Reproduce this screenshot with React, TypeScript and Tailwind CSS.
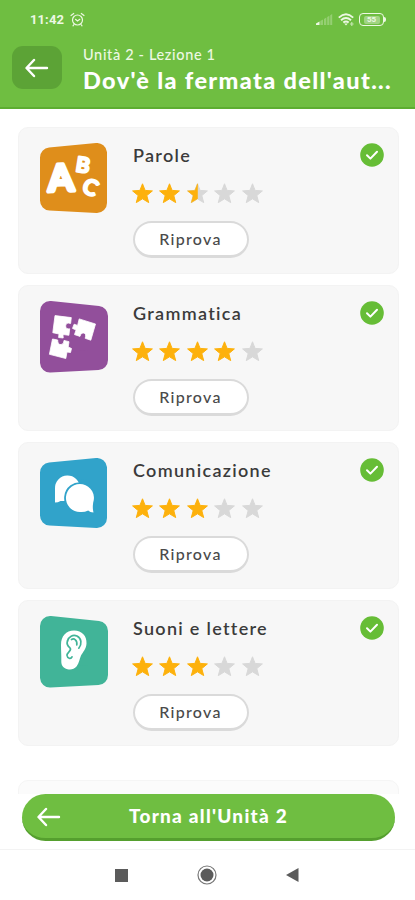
import type { ReactNode } from "react";

type Lesson = {
  title: string;
  stars: number;
  icon: ReactNode;
};

const STAR =
  "M10.5 0.8 L13.1 7.4 L20.4 7.9 L14.8 12.6 L16.7 19.6 L10.5 15.8 L4.3 19.6 L6.2 12.6 L0.6 7.9 L7.9 7.4 Z";
const HALF_STAR = "M10.5 0.8 L10.5 15.8 L4.3 19.6 L6.2 12.6 L0.6 7.9 L7.9 7.4 Z";

function Tile({
  color,
  flipped = false,
  children,
}: {
  color: string;
  flipped?: boolean;
  children: ReactNode;
}) {
  return (
    <svg width="68" height="72" viewBox="0 0 68 72" className="shrink-0">
      <polygon
        points={flipped ? "10,10 58,15 58,59 10,61.5" : "10,14.5 57,10 57,60 10,57.5"}
        fill={color}
        stroke={color}
        strokeWidth="20"
        strokeLinejoin="round"
      />
      {children}
    </svg>
  );
}

function LettersIcon() {
  return (
    <Tile color="#df8e1b">
      <g
        fill="#fff"
        stroke="#fff"
        strokeLinejoin="round"
        textAnchor="middle"
        className="font-['Lato',sans-serif] font-bold"
      >
        <text x="20.8" y="48" fontSize="37" strokeWidth="4" transform="rotate(-2 20.5 35)">A</text>
        <text x="43" y="29.5" fontSize="21" strokeWidth="2.2" transform="rotate(9 43 22)">B</text>
        <text x="50.2" y="52" fontSize="22" strokeWidth="2" transform="rotate(22 50.5 45)">C</text>
      </g>
    </Tile>
  );
}

function PuzzleIcon() {
  return (
    <Tile color="#924f9b" flipped>
      <g fill="#fff" stroke="#fff" strokeWidth="0.8" strokeLinejoin="round">
        <path d="M15 14.6 L31.3 16.6 L30.6 22.5 Q26 21 25.6 25 Q26 28.5 29.7 27.8 L28.9 34.3 L23 33.5 L23.2 37 L18.6 36.5 L19 33 L12.8 31.7 Z" />
        <path d="M39.2 17.9 L55.5 23 L50.8 39.2 L45.2 37.3 Q46.8 32.5 43.2 31.9 Q40.5 31.8 40 35.4 L34.5 33.6 L36.1 29 L32.5 27.4 L34.1 23.2 L37.6 24.4 Z" />
        <path d="M12.5 38 L17.7 39 Q17.5 43.5 21 43.6 Q24 43.4 24 39.4 L29 40.7 L28.2 46 L31.5 47.5 L30.5 51.5 L27 51 L25.8 57.5 L9.4 53.3 Z" />
      </g>
    </Tile>
  );
}

function ChatIcon() {
  return (
    <Tile color="#31a3ca">
      <path
        d="M15 44.5 V30.5 A12.5 12.5 0 1 1 27.5 42.5 Q22.5 43.2 20.5 43 Q18 44.5 15 44.5 Z"
        fill="#fff"
      />
      <path
        d="M53.5 54.5 Q50 54.3 48.2 52.4 Q44.5 54.3 40.5 54 A14 14 0 1 1 53.2 44.5 Q52.3 50 53.5 54.5 Z"
        fill="#fff"
        stroke="#31a3ca"
        strokeWidth="3.6"
        paintOrder="stroke"
      />
    </Tile>
  );
}

function EarIcon() {
  return (
    <Tile color="#41b498" flipped>
      <path
        d="M21.3 45 C21.5 40 21 35 21 29 C21 20 26 14.5 34 14.5 C42 14.5 46.9 20 46.5 27.5 C46.2 33 43 36 41 39.5 C39.4 43 39.3 47 36.5 50.5 C34.2 53.4 30.5 54 27.5 53.2 C23 52 21.2 49.5 21.3 45 Z"
        fill="#fff"
      />
      <g fill="none" stroke="#41b498" strokeWidth="1.7" strokeLinecap="round">
        <path d="M27.5 25 C28.5 20.5 33 18.2 37 20 C41.5 22.3 42.2 28 38.8 32.2" />
        <path d="M27.5 25 C26 28.5 28.3 30.5 30 32 C32.5 34.5 26.5 36.5 27 39.5 C27.4 42.3 30.8 43.5 32 40.8" />
        <path d="M31.5 23.5 C34 22 37.5 24 36.8 28.8" />
      </g>
    </Tile>
  );
}

const lessons: Lesson[] = [
  { title: "Parole", stars: 2.5, icon: <LettersIcon /> },
  { title: "Grammatica", stars: 4, icon: <PuzzleIcon /> },
  { title: "Comunicazione", stars: 3, icon: <ChatIcon /> },
  { title: "Suoni e lettere", stars: 3, icon: <EarIcon /> },
];

function Stars({ value }: { value: number }) {
  return (
    <div className="flex gap-[6.5px]">
      {[0, 1, 2, 3, 4].map((i) => {
        const fill = value >= i + 1 ? "#fdb10c" : "#d8d8d8";
        return (
          <svg key={i} width="21" height="21" viewBox="0 0 21 21" strokeWidth="1" strokeLinejoin="round">
            <path d={STAR} fill={fill} stroke={fill} />
            {value === i + 0.5 && <path d={HALF_STAR} fill="#fdb10c" stroke="#fdb10c" strokeWidth="0.6" />}
          </svg>
        );
      })}
    </div>
  );
}

function Arrow() {
  return (
    <svg
      width="24"
      height="20"
      viewBox="0 0 24 20"
      fill="none"
      stroke="#fff"
      strokeWidth="2.4"
      strokeLinecap="round"
      strokeLinejoin="round"
    >
      <path d="M9 2 L1.5 10 L9 18 M2 10 H22" />
    </svg>
  );
}

function LessonCard({ lesson }: { lesson: Lesson }) {
  return (
    <div className="flex h-[146.5px] shrink-0 rounded-[10px] border border-[#f3f3f3] bg-[#f7f7f7] pl-[21px] pr-[14px] pt-[15px]">
      {lesson.icon}
      <div className="ml-[23.5px] flex flex-1 flex-col items-start">
        <h2 className="h-6 pl-[1.5px] text-[18px] leading-6 font-semibold tracking-[1.3px] text-[#3b3b3b]">
          {lesson.title}
        </h2>
        <div className="mt-4">
          <Stars value={lesson.stars} />
        </div>
        <button className="mt-[17px] ml-px flex h-[37px] w-[116px] items-center justify-center rounded-full border-2 border-b-[3px] border-[#dadada] bg-white text-[16px] font-medium tracking-[1.3px] text-[#4a4a4a]">
          Riprova
        </button>
      </div>
      <svg width="24" height="24" viewBox="0 0 24 24" className="shrink-0">
        <circle cx="12" cy="12" r="11.8" fill="#66bd36" />
        <path
          d="M7 12.3 L10.4 15.6 L17 8.8"
          fill="none"
          stroke="#fff"
          strokeWidth="2"
          strokeLinecap="round"
          strokeLinejoin="round"
        />
      </svg>
    </div>
  );
}

function StatusBar() {
  return (
    <div className="flex h-[39px] items-center justify-between pl-[30px] pr-[29px] text-[#edf8e3]">
      <div className="flex items-center gap-[6px]">
        <span className="font-['Roboto',sans-serif] text-[13px] font-bold tracking-[0.1px]">11:42</span>
        <svg width="15" height="15" viewBox="0 0 15 15" fill="none" stroke="currentColor" strokeWidth="1.2" strokeLinecap="round">
          <circle cx="7.5" cy="8" r="5" />
          <path d="M1 3.5 L3.7 1.5 M14 3.5 L11.3 1.5 M5.5 7.3 L7.5 9 L9.8 7.3 M4 12.5 L3 13.8 M11 12.5 L12 13.8" />
        </svg>
      </div>
      <div className="flex items-center">
        <svg width="17" height="13" viewBox="0 0 17 13" fill="currentColor">
          <path d="M0 12 V10.5 L3.5 8.5 V12 Z" />
          <path d="M4.3 12 V8 L7 6.4 V12 Z M8 12 V6 L10.3 4.6 V12 Z M11.2 12 V4 L13.4 2.8 V12 Z M14.2 12 V2.3 L16.2 1 V12 Z" opacity="0.3" />
        </svg>
        <svg width="17" height="14" viewBox="0 0 17 14" fill="none" stroke="currentColor" strokeWidth="1.9" className="ml-[5px]">
          <path d="M0.8 4.6 Q8 -2 15.2 4.6 M3 7.2 Q8 2.8 13 7.2 M5.3 9.5 Q8 7.3 10.7 9.5" />
          <path d="M6.2 10.4 L8 12.4 L9.8 10.4 Z" fill="currentColor" stroke="none" />
          <path d="M13.8 9 V13 M12 11 H15.6" strokeWidth="1.1" opacity="0.7" />
        </svg>
        <div className="ml-[4px] flex h-[13px] w-[25px] items-center justify-center rounded-[4px] border-[1.5px] border-current">
          <span className="flex h-[8px] w-[16px] items-center justify-center rounded-[2px] bg-white/35 font-['Roboto',sans-serif] text-[8px] leading-none font-bold">
            55
          </span>
        </div>
        <span className="h-[5px] w-[2px] rounded-r bg-current" />
      </div>
    </div>
  );
}

export default function App() {
  return (
    <div className="flex h-[900px] w-[415px] flex-col overflow-hidden bg-white font-['Lato',sans-serif]">
      <header className="h-[109px] shrink-0 border-b-2 border-[#5cad30] bg-[#6fbe41] text-white">
        <StatusBar />
        <div className="flex pl-3 pt-[7px]">
          <button className="flex h-[43px] w-[50px] items-center justify-center rounded-[11px] bg-[#5ca336]">
            <Arrow />
          </button>
          <div className="ml-[21px] min-w-0">
            <p className="text-[14.5px] leading-[17px] font-medium tracking-[0.65px] text-[#edf8e3]">Unità 2 - Lezione 1</p>
            <h1 className="mt-[3px] text-[23.5px] leading-[29px] font-black tracking-[1.35px] whitespace-nowrap">
              Dov'è la fermata dell'aut...
            </h1>
          </div>
        </div>
      </header>

      <main className="flex h-[685px] shrink-0 flex-col gap-[11px] overflow-hidden pl-[18px] pr-4 pt-[18px]">
        {lessons.map((lesson) => (
          <LessonCard key={lesson.title} lesson={lesson} />
        ))}
        <div className="mt-[23px] h-[60px] shrink-0 rounded-[10px] border border-[#f5f5f5] bg-[#fbfbfb]" />
      </main>

      <footer className="flex h-[56px] shrink-0 flex-col border-b border-[#f3f3f3] px-[22px]">
        <button className="relative flex h-[47px] w-[373px] items-center justify-center rounded-full border-b-[3px] border-[#559f2e] bg-[#6fbe41] text-[19px] font-black tracking-[1.25px] text-white">
          <span className="absolute left-[15px] top-[13px]">
            <Arrow />
          </span>
          Torna all'Unità 2
        </button>
      </footer>

      <nav className="flex h-[50px] items-center pl-[115px]">
        <span className="size-[13px] bg-[#5b5b5b]" />
        <svg width="20" height="20" viewBox="0 0 20 20" className="ml-[69px]">
          <circle cx="10" cy="10" r="9" fill="none" stroke="#777" strokeWidth="1.2" />
          <circle cx="10" cy="10" r="6.5" fill="#5b5b5b" />
        </svg>
        <svg width="13" height="14" viewBox="0 0 13 14" className="ml-[69px]">
          <path d="M12.5 0 V14 L0 7 Z" fill="#5b5b5b" />
        </svg>
      </nav>
    </div>
  );
}
